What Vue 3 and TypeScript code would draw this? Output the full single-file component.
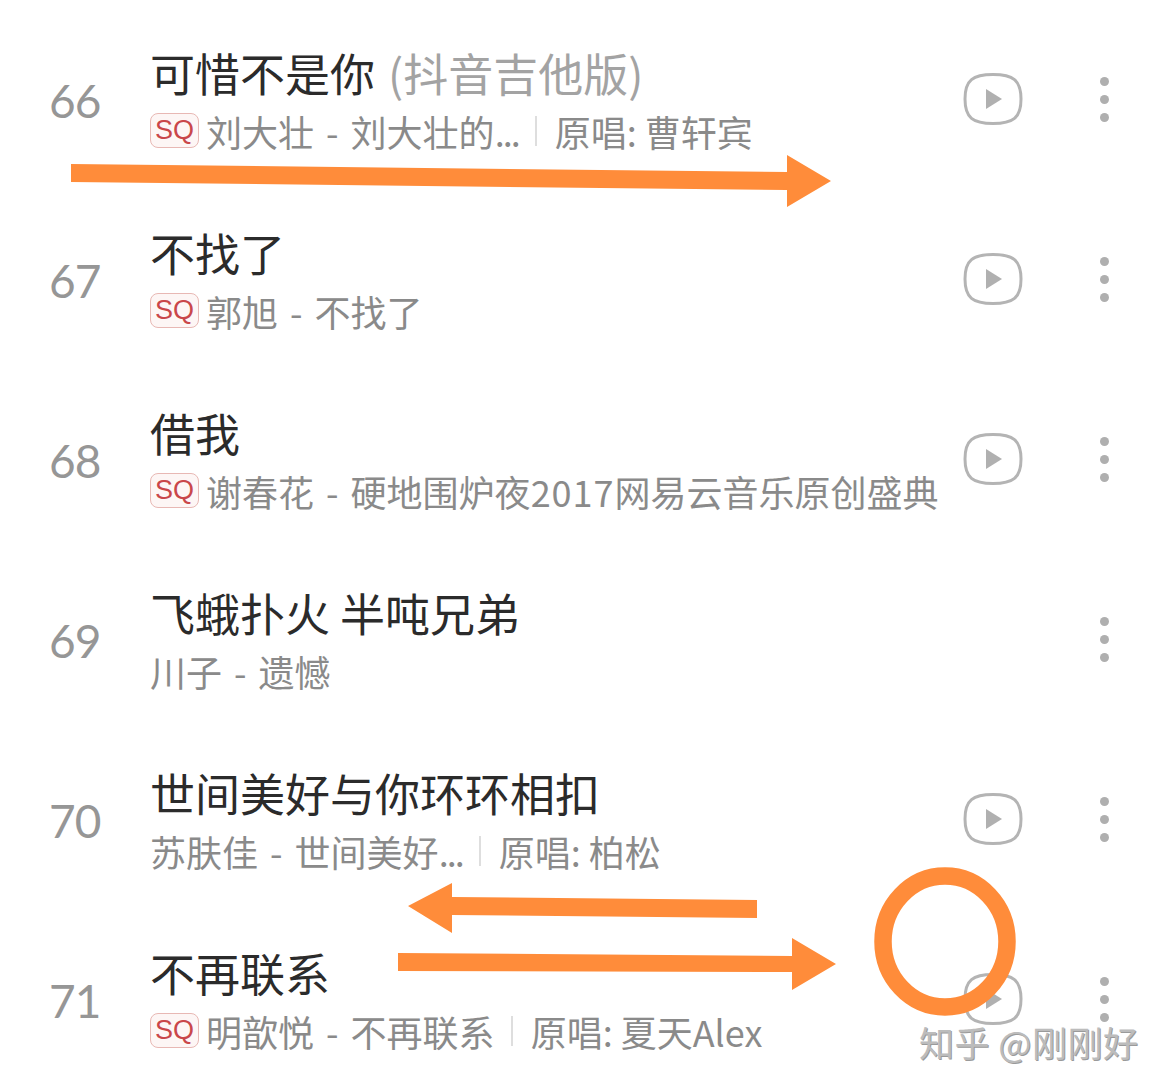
<script setup lang="ts">
interface Song {
  no: number
  title: string
  extra?: string
  sq: boolean
  meta: string
  digits?: string
  tail?: string
  more?: boolean
  cover?: string
  play: boolean
}
const songs: Song[] = [
  { no: 66, title: '可惜不是你', extra: '(抖音吉他版)', sq: true, meta: '刘大壮 - 刘大壮的', more: true, cover: '原唱: 曹轩宾', play: true },
  { no: 67, title: '不找了', sq: true, meta: '郭旭 - 不找了', play: true },
  { no: 68, title: '借我', sq: true, meta: '谢春花 - 硬地围炉夜', digits: '2017', tail: '网易云音乐原创盛典', play: true },
  { no: 69, title: '飞蛾扑火 半吨兄弟', sq: false, meta: '川子 - 遗憾', play: false },
  { no: 70, title: '世间美好与你环环相扣', sq: false, meta: '苏肤佳 - 世间美好', more: true, cover: '原唱: 柏松', play: true },
  { no: 71, title: '不再联系', sq: true, meta: '明歆悦 - 不再联系', cover: '原唱: 夏天Alex', play: true },
]
</script>

<template>
  <div class="page">
    <div v-for="s in songs" :key="s.no" class="row">
      <div class="no">{{ s.no }}</div>
      <div class="main">
        <div class="title">{{ s.title }}<span v-if="s.extra" class="extra">{{ s.extra }}</span></div>
        <div class="sub">
          <span v-if="s.sq" class="sq">SQ</span>
          <span class="meta">{{ s.meta }}<span v-if="s.digits" class="digits">{{ s.digits }}</span>{{ s.tail }}<span v-if="s.more" class="more">...</span></span>
          <span v-if="s.cover" class="sep"></span>
          <span v-if="s.cover" class="cover">{{ s.cover }}</span>
        </div>
      </div>
      <div class="play-slot">
        <svg v-if="s.play" width="60" height="54" viewBox="0 0 60 54" fill="none">
          <path d="M30 2.500C50 2.500 58 8 58 27C58 46 50 51.500 30 51.500C10 51.500 2 46 2 27C2 8 10 2.500 30 2.500Z" stroke="#b4b4b4" stroke-width="3" />
          <path d="M23 17L39 27L23 37Z" fill="#b0b0b0" />
        </svg>
      </div>
      <div class="dots"><i></i><i></i><i></i></div>
    </div>

    <svg class="marks" width="1167" height="1091" viewBox="0 0 1167 1091">
      <path fill="#ff8c3a" d="M71 164L787 172L787 155L831 181L787 207L787 190L71 182Z" />
      <path fill="#ff8c3a" d="M757 900L452 897L452 883L408 906L452 933L452 915L757 918Z" />
      <path fill="#ff8c3a" d="M398 953L792 956L792 938L836 964L792 990L792 972L398 971Z" />
      <ellipse cx="945" cy="941.500" rx="62" ry="65.500" fill="none" stroke="#ff8c3a" stroke-width="17.500" />
    </svg>
    <div class="mark-text">知乎 @刚刚好</div>
  </div>
</template>

<style>
html, body { margin: 0; background: #fff; }
</style>

<style scoped>
.page {
  position: relative;
  width: 1167px;
  height: 1091px;
  padding-top: 11px;
  box-sizing: border-box;
  overflow: hidden;
  background: #fff;
  font-family: "Noto Sans CJK SC", "Noto Sans", sans-serif;
}
.row {
  height: 180px;
  display: flex;
  align-items: center;
  padding-left: 49px;
  box-sizing: border-box;
}
.no {
  width: 101px;
  flex: none;
  font-family: Lato, sans-serif;
  font-size: 46px;
  line-height: 60px;
  color: #969696;
  letter-spacing: -1px;
}
.main {
  flex: 1;
  min-width: 0;
  margin-top: 2px;
}
.title {
  font-size: 45px;
  line-height: 58px;
  color: #2b2b2b;
  white-space: nowrap;
}
.extra {
  margin-left: 13px;
  color: #a3a3a3;
}
.sub {
  display: flex;
  align-items: center;
  height: 58px;
  font-size: 36px;
  color: #8a8a8a;
  white-space: nowrap;
}
.meta { word-spacing: 4px; }
.digits { letter-spacing: 1px; }
.more { letter-spacing: -2px; }
.sq {
  flex: none;
  width: 49px;
  height: 35px;
  box-sizing: border-box;
  margin-right: 7px;
  margin-top: -1px;
  border: 1px solid #e8b8b4;
  border-radius: 8px;
  background: #fdf6f5;
  color: #c9474a;
  font-family: "Liberation Sans", sans-serif;
  font-size: 27px;
  line-height: 33px;
  text-align: center;
}
.sep {
  flex: none;
  width: 2px;
  height: 30px;
  margin: 0 18px 0 16px;
  background: #dedede;
}
.play-slot {
  flex: none;
  width: 60px;
  height: 54px;
  margin-right: 77px;
  margin-top: -5px;
}
.dots {
  flex: none;
  width: 9px;
  margin-right: 58px;
  display: flex;
  flex-direction: column;
  gap: 9px;
  margin-top: -3px;
}
.dots i {
  width: 9px;
  height: 9px;
  border-radius: 50%;
  background: #afafaf;
}
.marks {
  position: absolute;
  left: 0;
  top: 0;
  pointer-events: none;
}
.mark-text {
  position: absolute;
  left: 919px;
  top: 1018px;
  font-size: 35px;
  letter-spacing: 0.5px;
  line-height: 48px;
  color: #bcbcbc;
  white-space: nowrap;
  text-shadow: 1px 1px 0 #9a9a9a;
}
</style>
